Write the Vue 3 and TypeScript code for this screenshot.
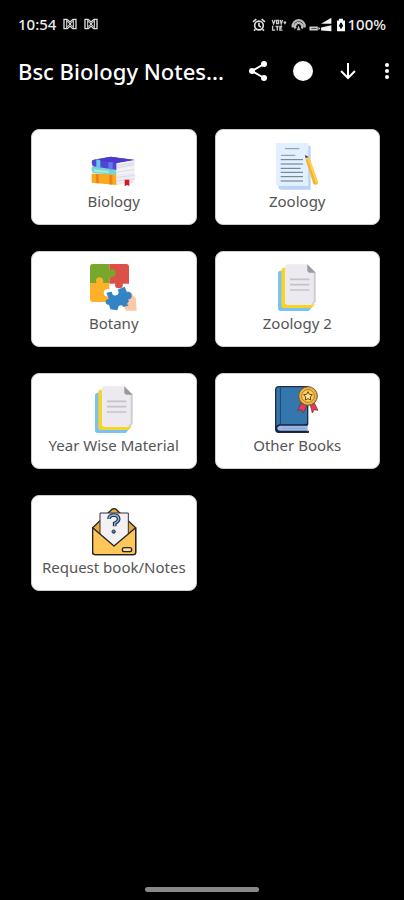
<script setup lang="ts">
type IconName = 'books' | 'notes' | 'puzzle' | 'pages' | 'award' | 'mail'

interface Category {
  label: string
  icon: IconName
}

const categories: Category[] = [
  { label: 'Biology', icon: 'books' },
  { label: 'Zoology', icon: 'notes' },
  { label: 'Botany', icon: 'puzzle' },
  { label: 'Zoology 2', icon: 'pages' },
  { label: 'Year Wise Material', icon: 'pages' },
  { label: 'Other Books', icon: 'award' },
  { label: 'Request book/Notes', icon: 'mail' },
]
</script>

<template>
  <div class="screen">
    <div class="status">
      <div class="status-side">
        <span class="clock">10:54</span>
        <svg v-for="n in 2" :key="n" class="notice" viewBox="0 0 42 36" aria-hidden="true">
          <path d="M3 4 L12 4 L21 12 L30 4 L39 4 V32 H29 L21 24 L13 32 H3 Z" fill="none" stroke="#ddd" stroke-width="4" />
          <path d="M11 6 V30 M31 6 V30 M12 10 L30 26 M30 10 L12 26" stroke="#ddd" stroke-width="3" />
        </svg>
      </div>
      <div class="status-side status-right">
        <svg class="signals" viewBox="152 46 286 50" aria-hidden="true">
          <g fill="none" stroke="#ddd" stroke-width="5">
            <circle cx="173" cy="74" r="13" />
            <path d="M155 63 L165 55 M191 63 L181 55 M173 66 V75 L179 79 M162 85 L158 90 M184 85 L188 90" />
          </g>
          <g fill="none" stroke="#ccc" stroke-width="4">
            <path d="M213 57 L217 69 L222 57 M226 59 H232 V68 H226 Z M237 57 L240 69 L244 57 M247 65 H255 M251 61 V70" />
            <path d="M214 75 V88 H222 M223 77 H232 M228 77 V89 M243 77 H236 V88 H244 M236 82 H242" />
          </g>
          <g fill="none" stroke="#bbb" stroke-width="7">
            <path d="M275 80 A18 18 0 1 1 310 80" />
            <path d="M283 83 A11 11 0 1 1 302 83" />
          </g>
          <path d="M287 88 L292 74 L298 88 Z" fill="#bbb" />
          <path d="M325 77 H350 V89 H325 Z M352 78 L358 83 L352 88 Z" fill="#ccc" />
          <path d="M331 83 H346" stroke="#555" stroke-width="3" />
          <path d="M360 69 L391 51 V69 Z M360 89 V80 L391 73 V91 Z" fill="#f2f2f2" />
          <path d="M408 59 H414 V54 H426 V59 H432 V91 H408 Z" fill="#fff" />
          <path d="M417 66 H423 V71 H426 V78 H423 V83 H417 V78 H414 V71 H417 Z" fill="#111" />
        </svg>
        <span class="battery">100%</span>
      </div>
    </div>

    <header class="bar">
      <h1 class="title">Bsc Biology Notes...</h1>
      <div class="actions">
        <button class="action" type="button" aria-label="Share">
          <svg viewBox="0 0 24 24">
            <path d="M18 5 L6 12 L18 19" fill="none" stroke="#fff" stroke-width="2" />
            <circle cx="18" cy="5" r="3" fill="#fff" />
            <circle cx="6" cy="12" r="3" fill="#fff" />
            <circle cx="18" cy="19" r="3" fill="#fff" />
          </svg>
        </button>
        <button class="action" type="button" aria-label="Theme">
          <svg viewBox="0 0 24 24"><circle cx="12" cy="12" r="10" fill="#fff" /></svg>
        </button>
        <button class="action" type="button" aria-label="Download">
          <svg viewBox="0 0 24 24">
            <path d="M12 4 V19 M5 12 L12 19 L19 12" fill="none" stroke="#fff" stroke-width="2" />
          </svg>
        </button>
        <button class="action more" type="button" aria-label="More options">
          <svg viewBox="0 0 24 24">
            <circle cx="12" cy="6" r="2" fill="#fff" />
            <circle cx="12" cy="12" r="2" fill="#fff" />
            <circle cx="12" cy="18" r="2" fill="#fff" />
          </svg>
        </button>
      </div>
    </header>

    <main class="grid">
      <button v-for="item in categories" :key="item.label" class="card" type="button">
        <svg v-if="item.icon === 'books'" class="icon" viewBox="210 66 144 144" aria-hidden="true">
          <path d="M215 161 L290 163 V195 L215 188 Z" fill="#fba81c" />
          <path d="M228 163 H236 V190 L228 189 Z M268 164 H277 V194 L268 193 Z" fill="#e9821a" />
          <path d="M288 163 L343 156 Q350 172 342 188 L290 195 Z" fill="#eeeaf2" />
          <path d="M291 172 L343 166 M291 182 L343 177" stroke="#d5cfdd" stroke-width="2" />
          <path d="M215 142 L226 138 L290 150 V164 L220 160 Q214 155 215 142 Z" fill="#73d6cf" />
          <path d="M222 148 L266 153 V160 L222 156 Z" fill="#a4ebdf" />
          <path d="M288 148 L344 139 V157 L290 164 Z" fill="#f4f2f7" />
          <path d="M291 156 L343 149" stroke="#cfcbd9" stroke-width="2" />
          <path d="M216 121 L272 110 L345 120 L290 130 V150 L218 139 Q213 131 216 121 Z" fill="#5145d8" />
          <path d="M218 120 L272 110 L345 120 L290 129 Z" fill="#4a3bcb" />
          <path d="M229 118 L241 121 V144 L229 141 Z" fill="#66c9e4" />
          <path d="M265 127 H278 V149 L265 146 Z" fill="#6578e8" />
          <path d="M290 130 L346 120 Q341 130 345 139 L290 149 Z" fill="#f0eef4" />
          <path d="M292 137 L343 128 M292 143 L343 134" stroke="#cecbd6" stroke-width="2" />
          <path d="M314 179 H328 V198 L321 195 L314 199 Z" fill="#d31925" />
        </svg>

        <svg v-else-if="item.icon === 'notes'" class="icon" viewBox="190 66 144 144" aria-hidden="true">
          <path d="M206 77 H303 V209 H215 Q207 209 206 199 Z" fill="#b9d3fb" />
          <path d="M199 69 H296 V198 H208 Q200 198 199 190 Z" fill="#e2effe" />
          <path d="M226 86 H269 M214 106 H257" stroke="#8493a5" stroke-width="3" />
          <path d="M213 119 H280 M213 132 H280 M213 145 H273 M213 157 H280 M213 170 H280 M213 183 H280" stroke="#60748a" stroke-width="3" />
          <path d="M288 119 L299 113 L325 187 Q325 194 317 195 L311 191 Z" fill="#f7b52d" />
          <path d="M294 116 L299 113 L325 187 L319 190 Z" fill="#ffd04d" />
          <path d="M287 106 L299 113 L288 119 Z" fill="#efc9a0" />
          <path d="M286 105 L297 111 L288 114 Z" fill="#353e4b" />
        </svg>

        <svg v-else-if="item.icon === 'puzzle'" class="icon" viewBox="210 57 144 144" aria-hidden="true">
          <path d="M218 57 H268 V114 H210 V66 Q210 57 218 57 Z" fill="#77a82c" />
          <path d="M268 57 H319 Q327 57 327 66 V116 H308 Q311 130 296 130 Q282 129 286 116 H268 Z" fill="#dc5147" />
          <path d="M266 76 Q285 67 287 84 Q286 100 266 96 Z" fill="#77a82c" />
          <path d="M210 114 H229 Q225 98 239 97 Q253 99 249 114 H268 V133 Q253 129 251 144 Q252 157 268 154 V171 H219 Q210 171 210 162 Z" fill="#fdb128" />
          <path d="M314 139 L326 137 L347 158 L350 197 H318 L310 181 Z" fill="#fcc9a5" />
          <path d="M259 143 L276 140 Q276 154 289 151 Q300 146 293 134 L314 125 L321 142 Q334 139 335 150 Q337 162 325 163 L329 181 L310 186 Q306 177 296 183 L292 196 L271 193 L267 179 Q256 180 257 169 Q260 160 267 162 Z" fill="#3384c4" />
          <path d="M321 177 Q328 164 338 167 Q342 169 330 186 Z" fill="#fcc9a5" />
        </svg>

        <svg v-else-if="item.icon === 'pages'" class="icon" viewBox="190 57 144 144" aria-hidden="true">
          <path d="M205 85 Q205 77 213 77 H230 V187 H307 L297 198 H213 Q205 198 205 190 Z" fill="#77c3f3" />
          <path d="M215 76 Q215 68 223 68 H240 V178 H316 L306 189 H222 Q215 189 215 182 Z" fill="#f8d329" />
          <path d="M226 66 Q226 58 234 58 H293 L318 83 V170 L308 180 H234 Q226 180 226 172 Z" fill="#ece9ef" />
          <path d="M312 78 L318 83 V170 L308 180 L304 178 L312 169 Z" fill="#d0cdd5" />
          <path d="M293 58 L318 83 H300 Q293 83 293 76 Z" fill="#99979f" />
          <path d="M241 103 H299 M241 119 H299 M241 135 H299" stroke="#c5c2cb" stroke-width="5" />
        </svg>

        <svg v-else-if="item.icon === 'award'" class="icon" viewBox="190 63 144 144" aria-hidden="true">
          <path d="M208 65 H294 V178 H288 V199 H296 V202 H207 Q198 202 198 192 V75 Q198 65 208 65 Z" fill="#3477ac" stroke="#202e43" stroke-width="4" stroke-linejoin="round" />
          <path d="M212 67 V177" stroke="#23405f" stroke-width="3" />
          <path d="M294 180 H210 Q200 182 200 190 Q201 199 210 200 H294" fill="#9cb8e5" stroke="#16223b" stroke-width="5" />
          <path d="M216 190 H287" stroke="#7f9fcd" stroke-width="2" />
          <path d="M274 114 L292 121 L281 144 L275 134 L264 137 Z M302 121 L314 114 L325 136 L314 134 L308 144 Z" fill="#dc3f56" stroke="#71263a" stroke-width="2" />
          <circle cx="295" cy="93" r="28" fill="#eeb43e" stroke="#664e36" stroke-width="3" />
          <circle cx="295" cy="93" r="19" fill="#ffd160" stroke="#b57921" stroke-width="3" />
          <path d="M295 80 L299 88 L308 89 L302 96 L303 105 L295 101 L287 105 L288 96 L282 89 L291 88 Z" fill="#ffe38a" stroke="#654823" stroke-width="3" />
        </svg>

        <svg v-else class="icon" viewBox="210 69 144 144" aria-hidden="true">
          <path d="M218 128 L276 73 Q282 69 288 73 L347 128 V202 Q347 209 340 209 H225 Q218 209 218 202 Z" fill="#e8a83d" stroke="#262525" stroke-width="4" />
          <path d="M240 84 H325 V151 L282 184 L240 151 Z" fill="#f4f1f4" stroke="#333" stroke-width="3" />
          <path d="M218 128 L282 183 L347 128 V202 Q347 209 340 209 H225 Q218 209 218 202 Z" fill="#ffc65a" stroke="#242424" stroke-width="4" stroke-linejoin="round" />
          <rect x="307" y="188" width="28" height="12" rx="6" fill="#ffe1a0" stroke="#242424" stroke-width="4" />
          <path d="M267 102 Q267 91 281 90 Q296 90 296 103 Q294 111 284 115 V124" fill="none" stroke="#253346" stroke-width="11" />
          <path d="M267 102 Q267 91 281 90 Q296 90 296 103 Q294 111 284 115 V123" fill="none" stroke="#83b8e5" stroke-width="4" />
          <circle cx="281" cy="140" r="5" fill="#477cab" stroke="#253346" stroke-width="3" />
        </svg>
        <span class="label">{{ item.label }}</span>
      </button>
    </main>

    <div class="home"></div>
  </div>
</template>

<style>
body {
  background: #000;
}
</style>

<style scoped>
.screen {
  display: flex;
  flex-direction: column;
  min-height: 100vh;
  box-sizing: border-box;
  background: #000;
  color: #fff;
  font-family: "Noto Sans", "Open Sans", sans-serif;
}

.status {
  display: flex;
  align-items: center;
  justify-content: space-between;
  height: 48px;
  padding: 0 18px;
}

.status-side {
  display: flex;
  align-items: center;
  gap: 7px;
}

.status-right {
  gap: 0;
}

.clock,
.battery {
  font-size: 15px;
  font-weight: 500;
  line-height: 20px;
  color: #eee;
}

.notice {
  width: 14px;
  height: 12px;
}

.signals {
  width: 95px;
  height: 17px;
}

.bar {
  display: flex;
  align-items: center;
  justify-content: space-between;
  height: 46px;
  padding: 0 5px 0 18px;
}

.title {
  margin: 0;
  font-size: 22px;
  font-weight: 500;
  line-height: 32px;
  white-space: nowrap;
}

.actions {
  display: flex;
  gap: 21px;
}

.action {
  display: flex;
  padding: 0;
  border: 0;
  background: none;
}

.action svg {
  width: 24px;
  height: 24px;
}

.more {
  margin-left: -6px;
}

.grid {
  display: grid;
  grid-template-columns: 1fr 1fr;
  gap: 26px 18px;
  padding: 35px 24px 24px 31px;
}

.card {
  display: flex;
  flex-direction: column;
  align-items: center;
  min-height: 96px;
  padding: 12px 4px;
  border: 1px solid #ccc;
  border-radius: 8px;
  box-sizing: border-box;
  background: #fff;
  color: #555;
  font-family: inherit;
}

.icon {
  width: 48px;
  height: 48px;
}

.label {
  font-size: 15px;
  line-height: 22px;
  white-space: nowrap;
}

.home {
  width: 28%;
  height: 5px;
  margin: auto auto 8px;
  border-radius: 3px;
  background: #888;
}
</style>
